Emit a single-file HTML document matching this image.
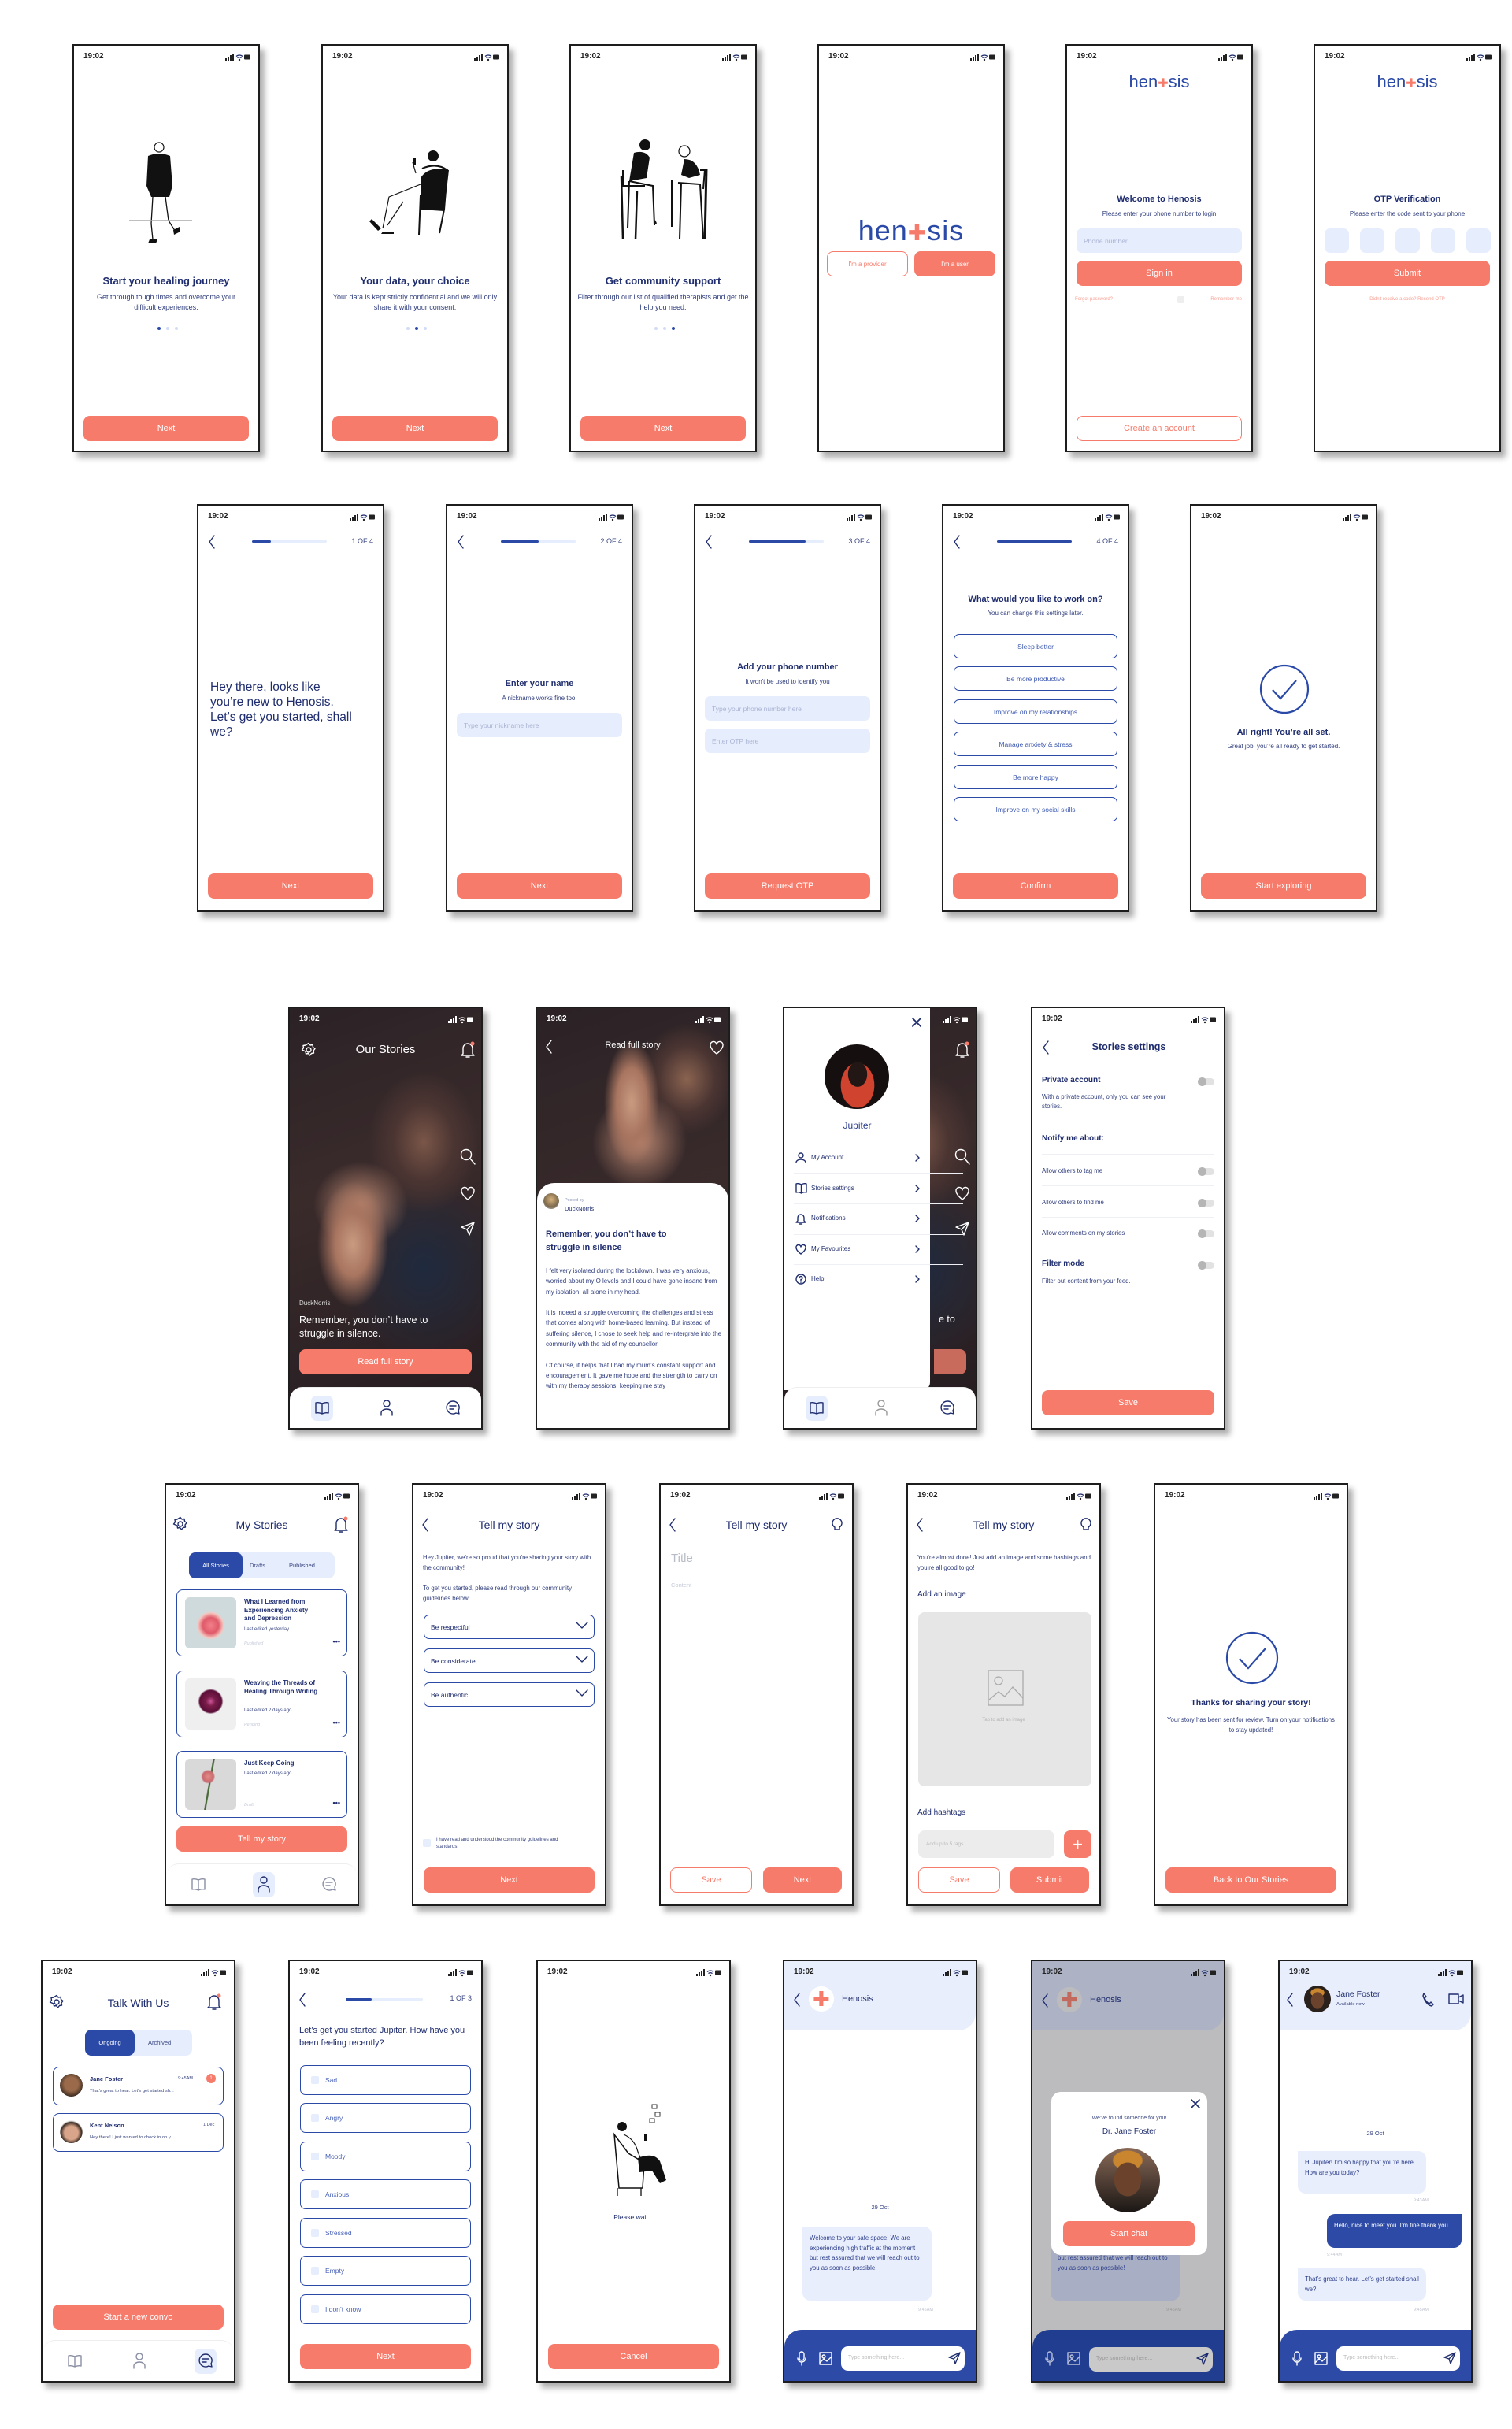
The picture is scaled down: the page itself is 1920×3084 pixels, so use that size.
<!DOCTYPE html>
<html><head><meta charset="utf-8">
<style>
*{box-sizing:border-box;margin:0;padding:0}
body{width:1920px;height:3084px;background:#fff;position:relative;overflow:hidden;font-family:"Liberation Sans",sans-serif;color:#1f2d6e}
.ph{position:absolute;background:#fff;border:2px solid #1d1d1d;box-shadow:6px 7px 7px rgba(0,0,0,.32);overflow:hidden}
.A{width:238px;height:518px}.B{width:247px;height:537px}
.a{position:absolute}
.st{position:absolute;left:12px;top:8px;font-weight:bold;font-size:10px;color:#222}
.sb{position:absolute;right:8px;top:10px;fill:#222}
.w .st{color:#fff}.w .sb{fill:#fff}
.btn{position:absolute;left:12px;right:12px;height:32px;border-radius:8px;background:#f77b6b;color:#fff;font-size:11px;display:flex;align-items:center;justify-content:center}
.obtn{position:absolute;height:32px;border-radius:8px;border:1.5px solid #f77b6b;color:#f77b6b;font-size:11px;display:flex;align-items:center;justify-content:center;background:#fff}
.c{text-align:center;left:0;right:0}
.t13{font-size:13px;font-weight:bold;color:#1f2d6e}
.s9{font-size:9px;color:#2f3d7c;line-height:13px}
.inp{position:absolute;left:12px;right:12px;height:31px;border-radius:7px;background:#e6edfc;color:#aab4d4;font-size:8.5px;padding-left:9px;display:flex;align-items:center}
.opt{position:absolute;left:13px;right:13px;height:31px;border:1.5px solid #2b4aa8;border-radius:7px;font-size:8.5px;color:#3b57b0;display:flex;align-items:center;justify-content:center}
.ic{position:absolute;fill:none;stroke:#1f2d6e;stroke-width:1.4;stroke-linecap:round;stroke-linejoin:round}
.wi{stroke:#fff}
.nav{position:absolute;left:0;right:0;bottom:0;height:52px;background:#fff;border-radius:16px 16px 0 0;border-top:1px solid #eee}
.hl{position:absolute;width:28px;height:32px;border-radius:7px;background:#e6edfc}
.card{position:absolute;left:13px;right:13px;border:1.5px solid #2b4aa8;border-radius:8px;background:#fff}
.tg{position:absolute;right:12px;width:20px;height:9px;border-radius:5px;background:#e2e2e2}
.tg:before{content:"";position:absolute;left:-1px;top:-1px;width:11px;height:11px;border-radius:50%;background:#b5b5b5}
.hr{position:absolute;left:12px;right:12px;height:1px;background:#eef0f6}
.photo{position:absolute;left:0;top:0;right:0;bottom:0;background:
radial-gradient(ellipse 45px 80px at 80px 300px,#c99a80 0%,#a87560 50%,transparent 100%),
radial-gradient(ellipse 60px 55px at 90px 250px,#b98670 0%,transparent 100%),
radial-gradient(ellipse 70px 90px at 170px 170px,#7a5648 0%,#4b3532 55%,transparent 100%),
radial-gradient(ellipse 110px 120px at 170px 330px,#1f2a3e 0%,transparent 100%),
linear-gradient(160deg,#2b2226 0%,#3a2b2b 40%,#241c21 100%)}
</style></head><body>

<!-- ===== ROW 1 ===== -->
<div class="ph A" style="left:92px;top:56px">
<div class="st">19:02</div><svg class="sb" width="34" height="10" viewBox="0 0 34 10"><rect x="0" y="6" width="2" height="3"/><rect x="3" y="4" width="2" height="5"/><rect x="6" y="2" width="2" height="7"/><rect x="9" y="0" width="2" height="9"/><path d="M14 3.5a6 6 0 0 1 8 0M15.5 5.6a3.6 3.6 0 0 1 5 0" stroke="currentColor" fill="none" stroke-width="1.3"/><circle cx="18" cy="8" r="1.2"/><rect x="24" y="1.5" width="8" height="6" rx="1"/></svg>
<svg class="a" style="left:70px;top:118px" width="100" height="140" viewBox="0 0 100 140"><circle cx="38" cy="11" r="6" fill="none" stroke="#111" stroke-width="1.2"/><path d="M24 22q14-6 28 0l3 38-4 14H28l-6-14z" fill="#111"/><path d="M30 74l-2 34 2 20M46 74l4 30 10 16" stroke="#111" stroke-width="1.3" fill="none"/><path d="M26 128h10l-2 5h-10zM56 116l8-4 1 6-8 4z" fill="#111"/><path d="M0 104h80" stroke="#aaa" stroke-width="1.5"/></svg>
<div class="a c t13" style="top:291px">Start your healing journey</div>
<div class="a c s9" style="top:313px;left:14px;right:14px">Get through tough times and overcome your difficult experiences.</div>
<div class="a" style="top:357px;left:106px;width:26px;height:4px"><i class="a" style="left:0;width:4px;height:4px;border-radius:2px;background:#2b4aa8"></i><i class="a" style="left:11px;width:4px;height:4px;border-radius:2px;background:#d3dcf6"></i><i class="a" style="left:22px;width:4px;height:4px;border-radius:2px;background:#d3dcf6"></i></div>
<div class="btn" style="top:470px">Next</div></div>

<div class="ph A" style="left:408px;top:56px">
<div class="st">19:02</div><svg class="sb" width="34" height="10" viewBox="0 0 34 10"><rect x="0" y="6" width="2" height="3"/><rect x="3" y="4" width="2" height="5"/><rect x="6" y="2" width="2" height="7"/><rect x="9" y="0" width="2" height="9"/><path d="M14 3.5a6 6 0 0 1 8 0M15.5 5.6a3.6 3.6 0 0 1 5 0" stroke="currentColor" fill="none" stroke-width="1.3"/><circle cx="18" cy="8" r="1.2"/><rect x="24" y="1.5" width="8" height="6" rx="1"/></svg>
<svg class="a" style="left:52px;top:128px" width="130" height="120" viewBox="0 0 130 120"><path d="M74 28q18-8 32 2l-4 50-6 30M72 62l-2 50" stroke="#111" stroke-width="2" fill="none"/><path d="M72 40q10-16 36-10l-6 52-30-2z" fill="#111"/><circle cx="88" cy="12" r="7" fill="#111"/><path d="M72 48l-40 16-8 40M50 70l-20 30M62 20l4 14" stroke="#111" stroke-width="1.2" fill="none"/><path d="M10 92l12 12-4 3-11-12zM24 108h14v3H22z" fill="#111"/><rect x="62" y="14" width="4" height="9" fill="#111"/></svg>
<div class="a c t13" style="top:291px">Your data, your choice</div>
<div class="a c s9" style="top:313px;left:8px;right:8px">Your data is kept strictly confidential and we will only share it with your consent.</div>
<div class="a" style="top:357px;left:106px;width:26px;height:4px"><i class="a" style="left:0;width:4px;height:4px;border-radius:2px;background:#d3dcf6"></i><i class="a" style="left:11px;width:4px;height:4px;border-radius:2px;background:#2b4aa8"></i><i class="a" style="left:22px;width:4px;height:4px;border-radius:2px;background:#d3dcf6"></i></div>
<div class="btn" style="top:470px">Next</div></div>

<div class="ph A" style="left:723px;top:56px">
<div class="st">19:02</div><svg class="sb" width="34" height="10" viewBox="0 0 34 10"><rect x="0" y="6" width="2" height="3"/><rect x="3" y="4" width="2" height="5"/><rect x="6" y="2" width="2" height="7"/><rect x="9" y="0" width="2" height="9"/><path d="M14 3.5a6 6 0 0 1 8 0M15.5 5.6a3.6 3.6 0 0 1 5 0" stroke="currentColor" fill="none" stroke-width="1.3"/><circle cx="18" cy="8" r="1.2"/><rect x="24" y="1.5" width="8" height="6" rx="1"/></svg>
<svg class="a" style="left:44px;top:118px" width="150" height="135" viewBox="0 0 150 135"><circle cx="50" cy="8" r="7" fill="#111"/><path d="M36 18q14-4 20 6l-4 26-22 4z" fill="#111"/><path d="M30 54l30 6 2 50M30 54l-2 60M22 40l0 20 8 0M20 60h30" stroke="#111" stroke-width="2" fill="none"/><path d="M20 48l2 80M40 66l-2 62M62 104l2 4" stroke="#111" stroke-width="2.5"/><circle cx="100" cy="16" r="7" fill="none" stroke="#111" stroke-width="1.2"/><path d="M100 26q16 0 20 20l-14 4-10-4z" fill="#111"/><path d="M92 56l28 2 4 70M96 56l-2 72M120 40l6 0-2 24M84 52l0 60" stroke="#111" stroke-width="2" fill="none"/><path d="M128 38l-2 90" stroke="#111" stroke-width="3"/></svg>
<div class="a c t13" style="top:291px">Get community support</div>
<div class="a c s9" style="top:313px;left:8px;right:8px">Filter through our list of qualified therapists and get the help you need.</div>
<div class="a" style="top:357px;left:106px;width:26px;height:4px"><i class="a" style="left:0;width:4px;height:4px;border-radius:2px;background:#d3dcf6"></i><i class="a" style="left:11px;width:4px;height:4px;border-radius:2px;background:#d3dcf6"></i><i class="a" style="left:22px;width:4px;height:4px;border-radius:2px;background:#2b4aa8"></i></div>
<div class="btn" style="top:470px">Next</div></div>

<div class="ph A" style="left:1038px;top:56px">
<div class="st">19:02</div><svg class="sb" width="34" height="10" viewBox="0 0 34 10"><rect x="0" y="6" width="2" height="3"/><rect x="3" y="4" width="2" height="5"/><rect x="6" y="2" width="2" height="7"/><rect x="9" y="0" width="2" height="9"/><path d="M14 3.5a6 6 0 0 1 8 0M15.5 5.6a3.6 3.6 0 0 1 5 0" stroke="currentColor" fill="none" stroke-width="1.3"/><circle cx="18" cy="8" r="1.2"/><rect x="24" y="1.5" width="8" height="6" rx="1"/></svg>
<div class="a c" style="top:214px;font-size:36px;color:#2b4aa8;letter-spacing:1px">hen<span style="color:#f77b6b;font-size:28px">✚</span>sis</div>
<div class="obtn" style="left:10px;width:103px;top:261px;font-size:8px">I'm a provider</div>
<div class="btn" style="left:121px;right:10px;top:261px;font-size:8px">I'm a user</div></div>

<div class="ph A" style="left:1353px;top:56px">
<div class="st">19:02</div><svg class="sb" width="34" height="10" viewBox="0 0 34 10"><rect x="0" y="6" width="2" height="3"/><rect x="3" y="4" width="2" height="5"/><rect x="6" y="2" width="2" height="7"/><rect x="9" y="0" width="2" height="9"/><path d="M14 3.5a6 6 0 0 1 8 0M15.5 5.6a3.6 3.6 0 0 1 5 0" stroke="currentColor" fill="none" stroke-width="1.3"/><circle cx="18" cy="8" r="1.2"/><rect x="24" y="1.5" width="8" height="6" rx="1"/></svg>
<div class="a c" style="top:33px;font-size:22px;color:#2b4aa8">hen<span style="color:#f77b6b;font-size:16px">✚</span>sis</div>
<div class="a c" style="top:189px;font-size:11px;font-weight:bold">Welcome to Henosis</div>
<div class="a c" style="top:209px;font-size:8px;color:#2f3d7c">Please enter your phone number to login</div>
<div class="inp" style="top:232px">Phone number</div>
<div class="btn" style="top:273px">Sign in</div>
<div class="a" style="top:319px;left:10px;font-size:6px;color:#f9a094">Forgot password?</div>
<div class="a" style="top:318px;left:140px;width:9px;height:9px;background:#eee;border-radius:2px"></div>
<div class="a" style="top:319px;right:12px;font-size:6px;color:#f9a094">Remember me</div>
<div class="obtn" style="left:12px;right:12px;top:470px">Create an account</div></div>

<div class="ph A" style="left:1668px;top:56px">
<div class="st">19:02</div><svg class="sb" width="34" height="10" viewBox="0 0 34 10"><rect x="0" y="6" width="2" height="3"/><rect x="3" y="4" width="2" height="5"/><rect x="6" y="2" width="2" height="7"/><rect x="9" y="0" width="2" height="9"/><path d="M14 3.5a6 6 0 0 1 8 0M15.5 5.6a3.6 3.6 0 0 1 5 0" stroke="currentColor" fill="none" stroke-width="1.3"/><circle cx="18" cy="8" r="1.2"/><rect x="24" y="1.5" width="8" height="6" rx="1"/></svg>
<div class="a c" style="top:33px;font-size:22px;color:#2b4aa8">hen<span style="color:#f77b6b;font-size:16px">✚</span>sis</div>
<div class="a c" style="top:189px;font-size:11px;font-weight:bold">OTP Verification</div>
<div class="a c" style="top:209px;font-size:8px;color:#2f3d7c">Please enter the code sent to your phone</div>
<div class="a" style="top:232px;left:12px;width:31px;height:31px;border-radius:7px;background:#e6edfc"></div>
<div class="a" style="top:232px;left:57px;width:31px;height:31px;border-radius:7px;background:#e6edfc"></div>
<div class="a" style="top:232px;left:102px;width:31px;height:31px;border-radius:7px;background:#e6edfc"></div>
<div class="a" style="top:232px;left:147px;width:31px;height:31px;border-radius:7px;background:#e6edfc"></div>
<div class="a" style="top:232px;left:192px;width:31px;height:31px;border-radius:7px;background:#e6edfc"></div>
<div class="btn" style="top:273px">Submit</div>
<div class="a c" style="top:319px;font-size:6px;color:#f9a094">Didn't receive a code? Resend OTP</div></div>

<!-- ===== ROW 2 ===== -->
<div class="ph A" style="left:250px;top:640px">
<div class="st">19:02</div><svg class="sb" width="34" height="10" viewBox="0 0 34 10"><rect x="0" y="6" width="2" height="3"/><rect x="3" y="4" width="2" height="5"/><rect x="6" y="2" width="2" height="7"/><rect x="9" y="0" width="2" height="9"/><path d="M14 3.5a6 6 0 0 1 8 0M15.5 5.6a3.6 3.6 0 0 1 5 0" stroke="currentColor" fill="none" stroke-width="1.3"/><circle cx="18" cy="8" r="1.2"/><rect x="24" y="1.5" width="8" height="6" rx="1"/></svg>
<svg class="ic" style="left:12px;top:37px" width="10" height="18"><path d="M8 1L2 9l6 8"/></svg>
<div class="a" style="left:68px;top:44px;width:95px;height:3px;background:#e6edfc;border-radius:2px"><i class="a" style="left:0;top:0;width:24px;height:3px;background:#2b4aa8;border-radius:2px"></i></div>
<div class="a" style="right:12px;top:40px;font-size:9px;color:#3b4883">1 OF 4</div>
<div class="a" style="left:15px;top:221px;font-size:15.5px;line-height:19px;color:#1f2d6e;width:185px">Hey there, looks like you’re new to Henosis. Let’s get you started, shall we?</div>
<div class="btn" style="top:467px">Next</div></div>

<div class="ph A" style="left:566px;top:640px">
<div class="st">19:02</div><svg class="sb" width="34" height="10" viewBox="0 0 34 10"><rect x="0" y="6" width="2" height="3"/><rect x="3" y="4" width="2" height="5"/><rect x="6" y="2" width="2" height="7"/><rect x="9" y="0" width="2" height="9"/><path d="M14 3.5a6 6 0 0 1 8 0M15.5 5.6a3.6 3.6 0 0 1 5 0" stroke="currentColor" fill="none" stroke-width="1.3"/><circle cx="18" cy="8" r="1.2"/><rect x="24" y="1.5" width="8" height="6" rx="1"/></svg>
<svg class="ic" style="left:12px;top:37px" width="10" height="18"><path d="M8 1L2 9l6 8"/></svg>
<div class="a" style="left:68px;top:44px;width:95px;height:3px;background:#e6edfc;border-radius:2px"><i class="a" style="left:0;top:0;width:48px;height:3px;background:#2b4aa8;border-radius:2px"></i></div>
<div class="a" style="right:12px;top:40px;font-size:9px;color:#3b4883">2 OF 4</div>
<div class="a c" style="top:220px;font-size:11px;font-weight:bold">Enter your name</div>
<div class="a c" style="top:240px;font-size:8px;color:#2f3d7c">A nickname works fine too!</div>
<div class="inp" style="top:263px">Type your nickname here</div>
<div class="btn" style="top:467px">Next</div></div>

<div class="ph A" style="left:881px;top:640px">
<div class="st">19:02</div><svg class="sb" width="34" height="10" viewBox="0 0 34 10"><rect x="0" y="6" width="2" height="3"/><rect x="3" y="4" width="2" height="5"/><rect x="6" y="2" width="2" height="7"/><rect x="9" y="0" width="2" height="9"/><path d="M14 3.5a6 6 0 0 1 8 0M15.5 5.6a3.6 3.6 0 0 1 5 0" stroke="currentColor" fill="none" stroke-width="1.3"/><circle cx="18" cy="8" r="1.2"/><rect x="24" y="1.5" width="8" height="6" rx="1"/></svg>
<svg class="ic" style="left:12px;top:37px" width="10" height="18"><path d="M8 1L2 9l6 8"/></svg>
<div class="a" style="left:68px;top:44px;width:95px;height:3px;background:#e6edfc;border-radius:2px"><i class="a" style="left:0;top:0;width:72px;height:3px;background:#2b4aa8;border-radius:2px"></i></div>
<div class="a" style="right:12px;top:40px;font-size:9px;color:#3b4883">3 OF 4</div>
<div class="a c" style="top:199px;font-size:11px;font-weight:bold">Add your phone number</div>
<div class="a c" style="top:219px;font-size:8px;color:#2f3d7c">It won't be used to identify you</div>
<div class="inp" style="top:242px">Type your phone number here</div>
<div class="inp" style="top:283px">Enter OTP here</div>
<div class="btn" style="top:467px">Request OTP</div></div>

<div class="ph A" style="left:1196px;top:640px">
<div class="st">19:02</div><svg class="sb" width="34" height="10" viewBox="0 0 34 10"><rect x="0" y="6" width="2" height="3"/><rect x="3" y="4" width="2" height="5"/><rect x="6" y="2" width="2" height="7"/><rect x="9" y="0" width="2" height="9"/><path d="M14 3.5a6 6 0 0 1 8 0M15.5 5.6a3.6 3.6 0 0 1 5 0" stroke="currentColor" fill="none" stroke-width="1.3"/><circle cx="18" cy="8" r="1.2"/><rect x="24" y="1.5" width="8" height="6" rx="1"/></svg>
<svg class="ic" style="left:12px;top:37px" width="10" height="18"><path d="M8 1L2 9l6 8"/></svg>
<div class="a" style="left:68px;top:44px;width:95px;height:3px;background:#2b4aa8;border-radius:2px"></div>
<div class="a" style="right:12px;top:40px;font-size:9px;color:#3b4883">4 OF 4</div>
<div class="a c" style="top:113px;font-size:11px;font-weight:bold">What would you like to work on?</div>
<div class="a c" style="top:132px;font-size:8px;color:#2f3d7c">You can change this settings later.</div>
<div class="opt" style="top:163px">Sleep better</div>
<div class="opt" style="top:204px">Be more productive</div>
<div class="opt" style="top:246px">Improve on my relationships</div>
<div class="opt" style="top:287px">Manage anxiety &amp; stress</div>
<div class="opt" style="top:329px">Be more happy</div>
<div class="opt" style="top:370px">Improve on my social skills</div>
<div class="btn" style="top:467px">Confirm</div></div>

<div class="ph A" style="left:1511px;top:640px">
<div class="st">19:02</div><svg class="sb" width="34" height="10" viewBox="0 0 34 10"><rect x="0" y="6" width="2" height="3"/><rect x="3" y="4" width="2" height="5"/><rect x="6" y="2" width="2" height="7"/><rect x="9" y="0" width="2" height="9"/><path d="M14 3.5a6 6 0 0 1 8 0M15.5 5.6a3.6 3.6 0 0 1 5 0" stroke="currentColor" fill="none" stroke-width="1.3"/><circle cx="18" cy="8" r="1.2"/><rect x="24" y="1.5" width="8" height="6" rx="1"/></svg>
<svg class="a" style="left:85px;top:200px" width="66" height="66" viewBox="0 0 66 66"><circle cx="33" cy="33" r="30" fill="none" stroke="#2b4aa8" stroke-width="2.2"/><path d="M18 34l10 11 20-23" fill="none" stroke="#2b4aa8" stroke-width="2.2"/></svg>
<div class="a c" style="top:282px;font-size:11px;font-weight:bold">All right! You’re all set.</div>
<div class="a c" style="top:301px;font-size:8px;color:#2f3d7c">Great job, you’re all ready to get started.</div>
<div class="btn" style="top:467px">Start exploring</div></div>

<!-- ===== ROW 3 ===== -->
<div class="ph B w" style="left:366px;top:1278px">
<div class="photo"></div>
<div class="st">19:02</div><svg class="sb" width="34" height="10" viewBox="0 0 34 10"><rect x="0" y="6" width="2" height="3"/><rect x="3" y="4" width="2" height="5"/><rect x="6" y="2" width="2" height="7"/><rect x="9" y="0" width="2" height="9"/><path d="M14 3.5a6 6 0 0 1 8 0M15.5 5.6a3.6 3.6 0 0 1 5 0" stroke="#fff" fill="none" stroke-width="1.3"/><circle cx="18" cy="8" r="1.2"/><rect x="24" y="1.5" width="8" height="6" rx="1"/></svg>
<svg class="ic wi" style="left:14px;top:43px" width="20" height="20" viewBox="0 0 20 20"><circle cx="10" cy="10" r="3"/><path d="M10 1.5l2 2.5 3-.5.5 3 2.5 2-2 2.5.5 3-3 .5-2 2.5-2-2.5-3 .5-.5-3L1.5 10l2-2.5-.5-3 3-.5z"/></svg>
<div class="a c" style="top:44px;font-size:15px;color:#fff">Our Stories</div>
<svg class="ic wi" style="left:216px;top:42px" width="20" height="22" viewBox="0 0 20 22"><path d="M4 16V9a6 6 0 0 1 12 0v7l2 2H2zM8 20h4"/><circle cx="16" cy="3" r="2.5" fill="#f77b6b" stroke="none"/></svg>
<svg class="ic wi" style="left:216px;top:178px" width="20" height="22" viewBox="0 0 20 22"><circle cx="8" cy="8" r="6.5"/><path d="M13 13l6 7"/></svg>
<svg class="ic wi" style="left:216px;top:225px" width="20" height="20" viewBox="0 0 20 20"><path d="M10 18S2 12 2 7a4 4 0 0 1 8-1 4 4 0 0 1 8 1c0 5-8 11-8 11z"/></svg>
<svg class="ic wi" style="left:216px;top:270px" width="20" height="20" viewBox="0 0 20 20"><path d="M18 2L2 8l7 3 3 7zM9 11l9-9"/></svg>
<div class="a" style="left:12px;top:370px;font-size:8px;color:#ddd">DuckNorris</div>
<div class="a" style="left:12px;top:388px;font-size:12.5px;line-height:17px;color:#fff;width:210px">Remember, you don’t have to struggle in silence.</div>
<div class="btn" style="top:433px">Read full story</div>
<div class="nav"><div class="hl" style="left:27px;top:10px"></div>
<svg class="ic" style="left:31px;top:17px" width="20" height="18" viewBox="0 0 20 18"><path d="M10 3v13M10 3Q6 1 2 2v13q4-1 8 1 4-2 8-1V2q-4-1-8 1"/></svg>
<svg class="ic" style="left:114px;top:14px" width="18" height="22" viewBox="0 0 18 22"><circle cx="9" cy="6" r="4"/><path d="M2 21v-3a7 5 0 0 1 14 0v3"/></svg>
<svg class="ic" style="left:197px;top:15px" width="20" height="20" viewBox="0 0 20 20"><path d="M10 2a8 8 0 1 0 4 15l4 1-1-4a8 8 0 0 0-7-12zM6 8h8M6 12h5"/></svg></div></div>

<div class="ph B w" style="left:680px;top:1278px">
<div class="photo" style="background:radial-gradient(ellipse 35px 80px at 120px 120px,#c99a80 0%,#a87560 55%,transparent 100%),radial-gradient(ellipse 60px 60px at 130px 170px,#b98670,transparent),radial-gradient(ellipse 60px 70px at 190px 90px,#8a6350,#4b3532 60%,transparent),linear-gradient(160deg,#2b2226,#3a2b2b 50%,#1f2a3e)"></div>
<div class="st">19:02</div><svg class="sb" width="34" height="10" viewBox="0 0 34 10"><rect x="0" y="6" width="2" height="3"/><rect x="3" y="4" width="2" height="5"/><rect x="6" y="2" width="2" height="7"/><rect x="9" y="0" width="2" height="9"/><path d="M14 3.5a6 6 0 0 1 8 0M15.5 5.6a3.6 3.6 0 0 1 5 0" stroke="#fff" fill="none" stroke-width="1.3"/><circle cx="18" cy="8" r="1.2"/><rect x="24" y="1.5" width="8" height="6" rx="1"/></svg>
<svg class="ic wi" style="left:10px;top:40px" width="10" height="18"><path d="M8 1L2 9l6 8"/></svg>
<div class="a c" style="top:41px;font-size:11px;color:#fff">Read full story</div>
<svg class="ic wi" style="left:218px;top:40px" width="20" height="20" viewBox="0 0 20 20"><path d="M10 18S2 12 2 7a4 4 0 0 1 8-1 4 4 0 0 1 8 1c0 5-8 11-8 11z"/></svg>
<div class="a" style="left:0;right:0;top:222px;bottom:0;background:#fff;border-radius:22px 22px 0 0"></div>
<div class="a" style="left:8px;top:235px;width:20px;height:20px;border-radius:50%;background:radial-gradient(circle at 50% 40%,#d9b27a,#7c6a4e 60%,#ccc)"></div>
<div class="a" style="left:35px;top:241px;font-size:5.5px;color:#8a93b8">Posted by</div>
<div class="a" style="left:35px;top:250px;font-size:7.5px;color:#1f2d6e">DuckNorris</div>
<div class="a" style="left:11px;top:279px;font-size:11px;line-height:17px;font-weight:bold;width:195px">Remember, you don’t have to struggle in silence</div>
<div class="a" style="left:11px;top:327px;font-size:8px;line-height:13.3px;color:#2f3d7c;width:225px">I felt very isolated during the lockdown. I was very anxious, worried about my O levels and I could have gone insane from my isolation, all alone in my head.<br><br>It is indeed a struggle overcoming the challenges and stress that comes along with home-based learning. But instead of suffering silence, I chose to seek help and re-intergrate into the community with the aid of my counsellor.<br><br>Of course, it helps that I had my mum’s constant support and encouragement. It gave me hope and the strength to carry on with my therapy sessions, keeping me stay</div></div>

<div class="ph B w" style="left:994px;top:1278px">
<div class="photo"></div>
<svg class="sb" width="34" height="10" viewBox="0 0 34 10"><rect x="0" y="6" width="2" height="3"/><rect x="3" y="4" width="2" height="5"/><rect x="6" y="2" width="2" height="7"/><rect x="9" y="0" width="2" height="9"/><path d="M14 3.5a6 6 0 0 1 8 0M15.5 5.6a3.6 3.6 0 0 1 5 0" stroke="#fff" fill="none" stroke-width="1.3"/><circle cx="18" cy="8" r="1.2"/><rect x="24" y="1.5" width="8" height="6" rx="1"/></svg>
<svg class="ic wi" style="left:216px;top:42px" width="20" height="22" viewBox="0 0 20 22"><path d="M4 16V9a6 6 0 0 1 12 0v7l2 2H2zM8 20h4"/><circle cx="16" cy="3" r="2.5" fill="#f77b6b" stroke="none"/></svg>
<svg class="ic wi" style="left:216px;top:178px" width="20" height="22" viewBox="0 0 20 22"><circle cx="8" cy="8" r="6.5"/><path d="M13 13l6 7"/></svg>
<svg class="ic wi" style="left:216px;top:225px" width="20" height="20" viewBox="0 0 20 20"><path d="M10 18S2 12 2 7a4 4 0 0 1 8-1 4 4 0 0 1 8 1c0 5-8 11-8 11z"/></svg>
<svg class="ic wi" style="left:216px;top:270px" width="20" height="20" viewBox="0 0 20 20"><path d="M18 2L2 8l7 3 3 7zM9 11l9-9"/></svg>
<div class="a" style="left:196px;top:388px;font-size:12.5px;color:#fff">e to</div>
<div class="a" style="left:190px;right:12px;top:433px;height:32px;background:#c86a5c;border-radius:0 8px 8px 0"></div>
<div class="a" style="left:0;top:0;width:185px;height:485px;background:#fff;border-radius:0 0 10px 0"></div>
<svg class="ic" style="left:161px;top:11px" width="14" height="14" viewBox="0 0 14 14"><path d="M2 2l10 10M12 2L2 12" stroke-width="1.8"/></svg>
<div class="a" style="left:51px;top:46px;width:82px;height:82px;border-radius:50%;background:radial-gradient(ellipse 20px 26px at 42px 38px,#231716 60%,transparent 62%),radial-gradient(ellipse 30px 40px at 42px 52px,#d0432f 70%,transparent 72%),#160f0f"></div>
<div class="a" style="left:0;width:185px;top:142px;text-align:center;font-size:12px;color:#2b3d8a">Jupiter</div>
<svg class="ic" style="left:14px;top:183px" width="14" height="14" viewBox="0 0 14 14"><circle cx="7" cy="4" r="3"/><path d="M1 13a6 4 0 0 1 12 0"/></svg><div class="a" style="left:34px;top:185px;font-size:8px">My Account</div><svg class="ic" style="left:166px;top:185px" width="6" height="10"><path d="M1 1l4 4-4 4"/></svg><div class="hr" style="top:209px;right:16px"></div>
<svg class="ic" style="left:14px;top:222px" width="15" height="14" viewBox="0 0 15 14"><path d="M7.5 2v11M7.5 2Q4 0 1 1v11q3-1 6.5 1 3.5-2 6.5-1V1q-3-1-6.5 1"/></svg><div class="a" style="left:34px;top:224px;font-size:8px">Stories settings</div><svg class="ic" style="left:166px;top:224px" width="6" height="10"><path d="M1 1l4 4-4 4"/></svg><div class="hr" style="top:248px;right:16px"></div>
<svg class="ic" style="left:14px;top:260px" width="14" height="15" viewBox="0 0 14 15"><path d="M3 10V6a4 4 0 0 1 8 0v4l2 2H1zM5.5 14h3"/></svg><div class="a" style="left:34px;top:262px;font-size:8px">Notifications</div><svg class="ic" style="left:166px;top:262px" width="6" height="10"><path d="M1 1l4 4-4 4"/></svg><div class="hr" style="top:287px;right:16px"></div>
<svg class="ic" style="left:14px;top:299px" width="14" height="14" viewBox="0 0 14 14"><path d="M7 13S1 9 1 5a3 3 0 0 1 6-1 3 3 0 0 1 6 1c0 4-6 8-6 8z"/></svg><div class="a" style="left:34px;top:301px;font-size:8px">My Favourites</div><svg class="ic" style="left:166px;top:301px" width="6" height="10"><path d="M1 1l4 4-4 4"/></svg><div class="hr" style="top:325px;right:16px"></div>
<svg class="ic" style="left:14px;top:337px" width="14" height="14" viewBox="0 0 14 14"><circle cx="7" cy="7" r="6"/><path d="M5 5.5a2 2 0 1 1 2 2v1.5M7 11v.3"/></svg><div class="a" style="left:34px;top:339px;font-size:8px">Help</div><svg class="ic" style="left:166px;top:339px" width="6" height="10"><path d="M1 1l4 4-4 4"/></svg>
<div class="nav"><div class="hl" style="left:27px;top:10px"></div>
<svg class="ic" style="left:31px;top:17px" width="20" height="18" viewBox="0 0 20 18"><path d="M10 3v13M10 3Q6 1 2 2v13q4-1 8 1 4-2 8-1V2q-4-1-8 1"/></svg>
<svg class="ic" style="left:114px;top:14px;stroke:#999" width="18" height="22" viewBox="0 0 18 22"><circle cx="9" cy="6" r="4"/><path d="M2 21v-3a7 5 0 0 1 14 0v3"/></svg>
<svg class="ic" style="left:197px;top:15px" width="20" height="20" viewBox="0 0 20 20"><path d="M10 2a8 8 0 1 0 4 15l4 1-1-4a8 8 0 0 0-7-12zM6 8h8M6 12h5"/></svg></div></div>

<div class="ph B" style="left:1309px;top:1278px">
<div class="st">19:02</div><svg class="sb" width="34" height="10" viewBox="0 0 34 10"><rect x="0" y="6" width="2" height="3"/><rect x="3" y="4" width="2" height="5"/><rect x="6" y="2" width="2" height="7"/><rect x="9" y="0" width="2" height="9"/><path d="M14 3.5a6 6 0 0 1 8 0M15.5 5.6a3.6 3.6 0 0 1 5 0" stroke="currentColor" fill="none" stroke-width="1.3"/><circle cx="18" cy="8" r="1.2"/><rect x="24" y="1.5" width="8" height="6" rx="1"/></svg>
<svg class="ic" style="left:12px;top:41px" width="10" height="18"><path d="M8 1L2 9l6 8"/></svg>
<div class="a" style="left:0;right:0;text-align:center;top:42px;font-size:12.5px;font-weight:bold;padding-left:2px">Stories settings</div>
<div class="a" style="left:12px;top:86px;font-size:10px;font-weight:bold">Private account</div><div class="tg" style="top:89px"></div>
<div class="a" style="left:12px;top:107px;font-size:7.8px;line-height:12px;color:#2f3d7c;width:170px">With a private account, only you can see your stories.</div>
<div class="a" style="left:12px;top:160px;font-size:10px;font-weight:bold">Notify me about:</div>
<div class="hr" style="top:185px"></div>
<div class="a" style="left:12px;top:202px;font-size:7.8px;color:#2f3d7c">Allow others to tag me</div><div class="tg" style="top:203px"></div>
<div class="hr" style="top:225px"></div>
<div class="a" style="left:12px;top:242px;font-size:7.8px;color:#2f3d7c">Allow others to find me</div><div class="tg" style="top:243px"></div>
<div class="hr" style="top:265px"></div>
<div class="a" style="left:12px;top:281px;font-size:7.8px;color:#2f3d7c">Allow comments on my stories</div><div class="tg" style="top:282px"></div>
<div class="a" style="left:12px;top:319px;font-size:10px;font-weight:bold">Filter mode</div><div class="tg" style="top:322px"></div>
<div class="a" style="left:12px;top:342px;font-size:7.8px;color:#2f3d7c">Filter out content from your feed.</div>
<div class="btn" style="top:485px">Save</div></div>

<!-- ===== ROW 4 ===== -->
<div class="ph B" style="left:209px;top:1883px">
<div class="st">19:02</div><svg class="sb" width="34" height="10" viewBox="0 0 34 10"><rect x="0" y="6" width="2" height="3"/><rect x="3" y="4" width="2" height="5"/><rect x="6" y="2" width="2" height="7"/><rect x="9" y="0" width="2" height="9"/><path d="M14 3.5a6 6 0 0 1 8 0M15.5 5.6a3.6 3.6 0 0 1 5 0" stroke="currentColor" fill="none" stroke-width="1.3"/><circle cx="18" cy="8" r="1.2"/><rect x="24" y="1.5" width="8" height="6" rx="1"/></svg>
<svg class="ic" style="left:8px;top:40px" width="20" height="20" viewBox="0 0 20 20"><circle cx="10" cy="10" r="3"/><path d="M10 1.5l2 2.5 3-.5.5 3 2.5 2-2 2.5.5 3-3 .5-2 2.5-2-2.5-3 .5-.5-3L1.5 10l2-2.5-.5-3 3-.5z"/></svg>
<div class="a c" style="top:43px;font-size:14px">My Stories</div>
<svg class="ic" style="left:212px;top:40px" width="20" height="22" viewBox="0 0 20 22"><path d="M4 16V9a6 6 0 0 1 12 0v7l2 2H2zM8 20h4"/><circle cx="16" cy="3" r="2.5" fill="#f77b6b" stroke="none"/></svg>
<div class="a" style="left:29px;top:86px;width:185px;height:33px;border-radius:8px;background:#e6edfc"></div>
<div class="a" style="left:29px;top:86px;width:68px;height:33px;border-radius:8px;background:#2b4aa8;color:#fff;font-size:7.5px;display:flex;align-items:center;justify-content:center">All Stories</div>
<div class="a" style="left:106px;top:98px;font-size:7.5px;color:#3b4883">Drafts</div>
<div class="a" style="left:156px;top:98px;font-size:7.5px;color:#3b4883">Published</div>
<div class="card" style="top:133px;height:85px"><div class="a" style="left:10px;top:9px;width:65px;height:65px;border-radius:6px;background:radial-gradient(circle at 50% 55%,#f2808a 0,#e05a6a 10px,#f4c7c0 16px,transparent 18px),#cfdadd"></div><div class="a" style="left:85px;top:10px;font-size:8px;line-height:10.5px;font-weight:bold;width:95px">What I Learned from Experiencing Anxiety and Depression</div><div class="a" style="left:85px;top:47px;font-size:6px;color:#3b4883">Last edited yesterday</div><div class="a" style="left:85px;top:65px;font-size:5.5px;color:#c5cad8;font-style:italic">Published</div><div class="a" style="right:8px;top:60px;font-size:9px;font-weight:bold">•••</div></div>
<div class="card" style="top:236px;height:85px"><div class="a" style="left:10px;top:9px;width:65px;height:65px;border-radius:6px;background:radial-gradient(circle at 50% 45%,#c59 0,#7a1c4a 6px,#5a0f38 14px,transparent 16px),#efefef"></div><div class="a" style="left:85px;top:10px;font-size:8px;line-height:10.5px;font-weight:bold;width:95px">Weaving the Threads of Healing Through Writing</div><div class="a" style="left:85px;top:47px;font-size:6px;color:#3b4883">Last edited 2 days ago</div><div class="a" style="left:85px;top:65px;font-size:5.5px;color:#c5cad8;font-style:italic">Pending</div><div class="a" style="right:8px;top:60px;font-size:9px;font-weight:bold">•••</div></div>
<div class="card" style="top:338px;height:85px"><div class="a" style="left:10px;top:9px;width:65px;height:65px;border-radius:6px;background:radial-gradient(circle at 45% 35%,#e58a86 0,#c86a70 7px,transparent 9px),linear-gradient(100deg,transparent 46%,#4a6a3a 47%,#4a6a3a 49%,transparent 50%),#d9d9d9"></div><div class="a" style="left:85px;top:10px;font-size:8px;line-height:10.5px;font-weight:bold;width:95px">Just Keep Going</div><div class="a" style="left:85px;top:25px;font-size:6px;color:#3b4883">Last edited 2 days ago</div><div class="a" style="left:85px;top:65px;font-size:5.5px;color:#c5cad8;font-style:italic">Draft</div><div class="a" style="right:8px;top:60px;font-size:9px;font-weight:bold">•••</div></div>
<div class="btn" style="top:434px;left:13px;right:13px">Tell my story</div>
<div class="nav"><div class="hl" style="left:110px;top:10px"></div>
<svg class="ic" style="left:31px;top:17px;stroke:#8a8fa3" width="20" height="18" viewBox="0 0 20 18"><path d="M10 3v13M10 3Q6 1 2 2v13q4-1 8 1 4-2 8-1V2q-4-1-8 1"/></svg>
<svg class="ic" style="left:115px;top:14px" width="18" height="22" viewBox="0 0 18 22"><circle cx="9" cy="6" r="4"/><path d="M2 21v-3a7 5 0 0 1 14 0v3"/></svg>
<svg class="ic" style="left:197px;top:15px;stroke:#8a8fa3" width="20" height="20" viewBox="0 0 20 20"><path d="M10 2a8 8 0 1 0 4 15l4 1-1-4a8 8 0 0 0-7-12zM6 8h8M6 12h5"/></svg></div></div>

<div class="ph B" style="left:523px;top:1883px">
<div class="st">19:02</div><svg class="sb" width="34" height="10" viewBox="0 0 34 10"><rect x="0" y="6" width="2" height="3"/><rect x="3" y="4" width="2" height="5"/><rect x="6" y="2" width="2" height="7"/><rect x="9" y="0" width="2" height="9"/><path d="M14 3.5a6 6 0 0 1 8 0M15.5 5.6a3.6 3.6 0 0 1 5 0" stroke="currentColor" fill="none" stroke-width="1.3"/><circle cx="18" cy="8" r="1.2"/><rect x="24" y="1.5" width="8" height="6" rx="1"/></svg>
<svg class="ic" style="left:10px;top:42px" width="10" height="18"><path d="M8 1L2 9l6 8"/></svg>
<div class="a c" style="top:43px;font-size:14px">Tell my story</div>
<div class="a" style="left:12px;top:86px;font-size:7.8px;line-height:13px;color:#2f3d7c;width:215px">Hey Jupiter, we’re so proud that you’re sharing your story with the community!<br><br>To get you started, please read through our community guidelines below:</div>
<div class="opt" style="top:165px;justify-content:flex-start;padding-left:8px;color:#1f2d6e">Be respectful</div><svg class="ic" style="left:206px;top:174px" width="16" height="10"><path d="M1 1l7 7 7-7"/></svg>
<div class="opt" style="top:208px;justify-content:flex-start;padding-left:8px;color:#1f2d6e">Be considerate</div><svg class="ic" style="left:206px;top:217px" width="16" height="10"><path d="M1 1l7 7 7-7"/></svg>
<div class="opt" style="top:251px;justify-content:flex-start;padding-left:8px;color:#1f2d6e">Be authentic</div><svg class="ic" style="left:206px;top:260px" width="16" height="10"><path d="M1 1l7 7 7-7"/></svg>
<div class="a" style="left:12px;top:450px;width:10px;height:10px;border-radius:2px;background:#e6edfc"></div>
<div class="a" style="left:29px;top:447px;font-size:6px;line-height:9px;color:#2f3d7c;width:180px">I have read and understood the community guidelines and standards.</div>
<div class="btn" style="top:486px;left:13px;right:13px">Next</div></div>

<div class="ph B" style="left:837px;top:1883px">
<div class="st">19:02</div><svg class="sb" width="34" height="10" viewBox="0 0 34 10"><rect x="0" y="6" width="2" height="3"/><rect x="3" y="4" width="2" height="5"/><rect x="6" y="2" width="2" height="7"/><rect x="9" y="0" width="2" height="9"/><path d="M14 3.5a6 6 0 0 1 8 0M15.5 5.6a3.6 3.6 0 0 1 5 0" stroke="currentColor" fill="none" stroke-width="1.3"/><circle cx="18" cy="8" r="1.2"/><rect x="24" y="1.5" width="8" height="6" rx="1"/></svg>
<svg class="ic" style="left:10px;top:42px" width="10" height="18"><path d="M8 1L2 9l6 8"/></svg>
<div class="a c" style="top:43px;font-size:14px">Tell my story</div>
<svg class="ic" style="left:217px;top:40px" width="14" height="20" viewBox="0 0 14 20"><path d="M4 14a6 6 0 1 1 6 0v3H4zM4 17h6"/></svg>
<div class="a" style="left:10px;top:84px;width:1px;height:22px;background:#2b4aa8"></div>
<div class="a" style="left:13px;top:85px;font-size:15px;color:#b8bcc8">Title</div>
<div class="a" style="left:13px;top:123px;font-size:7.5px;color:#c5cad8">Content</div>
<div class="obtn" style="top:486px;left:12px;width:104px">Save</div>
<div class="btn" style="top:486px;left:130px;right:13px">Next</div></div>

<div class="ph B" style="left:1151px;top:1883px">
<div class="st">19:02</div><svg class="sb" width="34" height="10" viewBox="0 0 34 10"><rect x="0" y="6" width="2" height="3"/><rect x="3" y="4" width="2" height="5"/><rect x="6" y="2" width="2" height="7"/><rect x="9" y="0" width="2" height="9"/><path d="M14 3.5a6 6 0 0 1 8 0M15.5 5.6a3.6 3.6 0 0 1 5 0" stroke="currentColor" fill="none" stroke-width="1.3"/><circle cx="18" cy="8" r="1.2"/><rect x="24" y="1.5" width="8" height="6" rx="1"/></svg>
<svg class="ic" style="left:10px;top:42px" width="10" height="18"><path d="M8 1L2 9l6 8"/></svg>
<div class="a c" style="top:43px;font-size:14px">Tell my story</div>
<svg class="ic" style="left:219px;top:40px" width="14" height="20" viewBox="0 0 14 20"><path d="M4 14a6 6 0 1 1 6 0v3H4zM4 17h6"/></svg>
<div class="a" style="left:12px;top:86px;font-size:7.8px;line-height:13px;color:#2f3d7c;width:222px">You’re almost done! Just add an image and some hashtags and you’re all good to go!</div>
<div class="a" style="left:12px;top:134px;font-size:10px">Add an image</div>
<div class="a" style="left:13px;top:162px;width:220px;height:221px;border-radius:8px;background:#e6e6e6"></div>
<svg class="a" style="left:101px;top:235px" width="46" height="46" viewBox="0 0 46 46"><rect x="1" y="1" width="44" height="44" fill="none" stroke="#aaa" stroke-width="1.3"/><circle cx="14" cy="14" r="5" fill="none" stroke="#aaa" stroke-width="1.3"/><path d="M2 38l12-10 8 6 10-12 13 14" fill="none" stroke="#aaa" stroke-width="1.3"/></svg>
<div class="a" style="left:0;right:0;text-align:center;top:296px;font-size:6px;color:#b5b5b5">Tap to add an image</div>
<div class="a" style="left:12px;top:411px;font-size:10px">Add hashtags</div>
<div class="a" style="left:13px;top:439px;width:173px;height:35px;border-radius:8px;background:#ececec;font-size:6.5px;color:#bbb;padding:14px 0 0 10px">Add up to 5 tags</div>
<div class="a" style="left:198px;top:439px;width:35px;height:35px;border-radius:8px;background:#f77b6b;color:#fff;font-size:22px;line-height:35px;text-align:center">+</div>
<div class="obtn" style="top:486px;left:13px;width:104px">Save</div>
<div class="btn" style="top:486px;left:130px;right:13px">Submit</div></div>

<div class="ph B" style="left:1465px;top:1883px">
<div class="st">19:02</div><svg class="sb" width="34" height="10" viewBox="0 0 34 10"><rect x="0" y="6" width="2" height="3"/><rect x="3" y="4" width="2" height="5"/><rect x="6" y="2" width="2" height="7"/><rect x="9" y="0" width="2" height="9"/><path d="M14 3.5a6 6 0 0 1 8 0M15.5 5.6a3.6 3.6 0 0 1 5 0" stroke="currentColor" fill="none" stroke-width="1.3"/><circle cx="18" cy="8" r="1.2"/><rect x="24" y="1.5" width="8" height="6" rx="1"/></svg>
<svg class="a" style="left:88px;top:185px" width="70" height="70" viewBox="0 0 70 70"><circle cx="35" cy="35" r="32" fill="none" stroke="#2b4aa8" stroke-width="2.2"/><path d="M19 36l11 12 22-25" fill="none" stroke="#2b4aa8" stroke-width="2.2"/></svg>
<div class="a c" style="top:271px;font-size:10.5px;font-weight:bold">Thanks for sharing your story!</div>
<div class="a c" style="top:292px;font-size:7.8px;line-height:13px;color:#2f3d7c;left:12px;right:12px">Your story has been sent for review. Turn on your notifications to stay updated!</div>
<div class="btn" style="top:486px;left:13px;right:13px">Back to Our Stories</div></div>

<!-- ===== ROW 5 ===== -->
<div class="ph B" style="left:52px;top:2488px">
<div class="st">19:02</div><svg class="sb" width="34" height="10" viewBox="0 0 34 10"><rect x="0" y="6" width="2" height="3"/><rect x="3" y="4" width="2" height="5"/><rect x="6" y="2" width="2" height="7"/><rect x="9" y="0" width="2" height="9"/><path d="M14 3.5a6 6 0 0 1 8 0M15.5 5.6a3.6 3.6 0 0 1 5 0" stroke="currentColor" fill="none" stroke-width="1.3"/><circle cx="18" cy="8" r="1.2"/><rect x="24" y="1.5" width="8" height="6" rx="1"/></svg>
<svg class="ic" style="left:8px;top:42px" width="20" height="20" viewBox="0 0 20 20"><circle cx="10" cy="10" r="3"/><path d="M10 1.5l2 2.5 3-.5.5 3 2.5 2-2 2.5.5 3-3 .5-2 2.5-2-2.5-3 .5-.5-3L1.5 10l2-2.5-.5-3 3-.5z"/></svg>
<div class="a c" style="top:45px;font-size:14px">Talk With Us</div>
<svg class="ic" style="left:208px;top:41px" width="20" height="22" viewBox="0 0 20 22"><path d="M4 16V9a6 6 0 0 1 12 0v7l2 2H2zM8 20h4"/><circle cx="16" cy="3" r="2.5" fill="#f77b6b" stroke="none"/></svg>
<div class="a" style="left:54px;top:87px;width:136px;height:33px;border-radius:8px;background:#e6edfc"></div>
<div class="a" style="left:54px;top:87px;width:63px;height:33px;border-radius:8px;background:#2b4aa8;color:#fff;font-size:7.5px;display:flex;align-items:center;justify-content:center">Ongoing</div>
<div class="a" style="left:134px;top:99px;font-size:7.5px;color:#3b4883">Archived</div>
<div class="card" style="top:134px;height:49px"><div class="a" style="left:8px;top:8px;width:29px;height:29px;border-radius:50%;background:radial-gradient(circle at 50% 45%,#9a6a4a 40%,#3a2a20 75%)"></div><div class="a" style="left:46px;top:10px;font-size:7.5px;font-weight:bold">Jane Foster</div><div class="a" style="left:158px;top:11px;font-size:5.5px;color:#3b4883">9:45AM</div><div class="a" style="left:194px;top:8px;width:12px;height:12px;border-radius:50%;background:#f77b6b;color:#fff;font-size:6px;text-align:center;line-height:12px">1</div><div class="a" style="left:46px;top:27px;font-size:5.8px;color:#3b4883">That’s great to hear. Let’s get started sh...</div></div>
<div class="card" style="top:193px;height:49px"><div class="a" style="left:8px;top:8px;width:29px;height:29px;border-radius:50%;background:radial-gradient(circle at 50% 55%,#d8a48a 40%,#3a2a20 62%,#eee 70%)"></div><div class="a" style="left:46px;top:10px;font-size:7.5px;font-weight:bold">Kent Nelson</div><div class="a" style="left:190px;top:11px;font-size:5.5px;color:#3b4883">1 Dec</div><div class="a" style="left:46px;top:27px;font-size:5.8px;color:#3b4883">Hey there! I just wanted to check in on y...</div></div>
<div class="btn" style="top:436px;left:13px;right:13px">Start a new convo</div>
<div class="nav"><div class="hl" style="left:193px;top:10px"></div>
<svg class="ic" style="left:31px;top:17px;stroke:#8a8fa3" width="20" height="18" viewBox="0 0 20 18"><path d="M10 3v13M10 3Q6 1 2 2v13q4-1 8 1 4-2 8-1V2q-4-1-8 1"/></svg>
<svg class="ic" style="left:114px;top:14px;stroke:#8a8fa3" width="18" height="22" viewBox="0 0 18 22"><circle cx="9" cy="6" r="4"/><path d="M2 21v-3a7 5 0 0 1 14 0v3"/></svg>
<svg class="ic" style="left:197px;top:15px" width="20" height="20" viewBox="0 0 20 20"><path d="M10 2a8 8 0 1 0 4 15l4 1-1-4a8 8 0 0 0-7-12zM6 8h8M6 12h5"/></svg></div></div>

<div class="ph B" style="left:366px;top:2488px">
<div class="st">19:02</div><svg class="sb" width="34" height="10" viewBox="0 0 34 10"><rect x="0" y="6" width="2" height="3"/><rect x="3" y="4" width="2" height="5"/><rect x="6" y="2" width="2" height="7"/><rect x="9" y="0" width="2" height="9"/><path d="M14 3.5a6 6 0 0 1 8 0M15.5 5.6a3.6 3.6 0 0 1 5 0" stroke="currentColor" fill="none" stroke-width="1.3"/><circle cx="18" cy="8" r="1.2"/><rect x="24" y="1.5" width="8" height="6" rx="1"/></svg>
<svg class="ic" style="left:11px;top:40px" width="10" height="18"><path d="M8 1L2 9l6 8"/></svg>
<div class="a" style="left:71px;top:47px;width:98px;height:3px;background:#e6edfc;border-radius:2px"><i class="a" style="left:0;top:0;width:33px;height:3px;background:#2b4aa8;border-radius:2px"></i></div>
<div class="a" style="right:12px;top:42px;font-size:9px;color:#3b4883">1 OF 3</div>
<div class="a" style="left:12px;top:80px;font-size:11px;line-height:16px;width:225px">Let’s get you started Jupiter. How have you been feeling recently?</div>
<div class="opt" style="top:132px;height:38px;justify-content:flex-start;padding-left:31px;color:#4a63b8">Sad<i class="a" style="left:13px;top:13px;width:10px;height:10px;border-radius:2px;background:#e6edfc"></i></div>
<div class="opt" style="top:180px;height:38px;justify-content:flex-start;padding-left:31px;color:#4a63b8">Angry<i class="a" style="left:13px;top:13px;width:10px;height:10px;border-radius:2px;background:#e6edfc"></i></div>
<div class="opt" style="top:229px;height:38px;justify-content:flex-start;padding-left:31px;color:#4a63b8">Moody<i class="a" style="left:13px;top:13px;width:10px;height:10px;border-radius:2px;background:#e6edfc"></i></div>
<div class="opt" style="top:277px;height:38px;justify-content:flex-start;padding-left:31px;color:#4a63b8">Anxious<i class="a" style="left:13px;top:13px;width:10px;height:10px;border-radius:2px;background:#e6edfc"></i></div>
<div class="opt" style="top:326px;height:38px;justify-content:flex-start;padding-left:31px;color:#4a63b8">Stressed<i class="a" style="left:13px;top:13px;width:10px;height:10px;border-radius:2px;background:#e6edfc"></i></div>
<div class="opt" style="top:374px;height:38px;justify-content:flex-start;padding-left:31px;color:#4a63b8">Empty<i class="a" style="left:13px;top:13px;width:10px;height:10px;border-radius:2px;background:#e6edfc"></i></div>
<div class="opt" style="top:423px;height:38px;justify-content:flex-start;padding-left:31px;color:#4a63b8">I don’t know<i class="a" style="left:13px;top:13px;width:10px;height:10px;border-radius:2px;background:#e6edfc"></i></div>
<div class="btn" style="top:486px;left:13px;right:13px">Next</div></div>

<div class="ph B" style="left:681px;top:2488px">
<div class="st">19:02</div><svg class="sb" width="34" height="10" viewBox="0 0 34 10"><rect x="0" y="6" width="2" height="3"/><rect x="3" y="4" width="2" height="5"/><rect x="6" y="2" width="2" height="7"/><rect x="9" y="0" width="2" height="9"/><path d="M14 3.5a6 6 0 0 1 8 0M15.5 5.6a3.6 3.6 0 0 1 5 0" stroke="currentColor" fill="none" stroke-width="1.3"/><circle cx="18" cy="8" r="1.2"/><rect x="24" y="1.5" width="8" height="6" rx="1"/></svg>
<svg class="a" style="left:85px;top:180px" width="90" height="120" viewBox="0 0 90 120"><rect x="60" y="2" width="6" height="5" fill="none" stroke="#333"/><rect x="64" y="12" width="6" height="5" fill="none" stroke="#333"/><rect x="57" y="20" width="6" height="5" fill="none" stroke="#333"/><circle cx="22" cy="30" r="6" fill="#111"/><path d="M12 40l6 68 30 0 2-32-20-12z" fill="none" stroke="#111" stroke-width="1.5"/><path d="M24 40q14 6 18 22l4 10" stroke="#111" stroke-width="1.2" fill="none"/><path d="M42 70q20-8 28 4l8 24-8 4-10-16-16 2z" fill="#111"/><path d="M16 108l0 10M46 108l0 10" stroke="#111" stroke-width="1.3"/><rect x="50" y="40" width="4" height="8" fill="#111"/></svg>
<div class="a c" style="top:320px;font-size:8.5px">Please wait...</div>
<div class="btn" style="top:486px;left:13px;right:13px">Cancel</div></div>

<div class="ph B" style="left:994px;top:2488px">
<div class="a" style="left:0;right:0;top:0;height:88px;background:#e8eefc;border-radius:0 0 22px 0"></div>
<div class="st">19:02</div><svg class="sb" width="34" height="10" viewBox="0 0 34 10"><rect x="0" y="6" width="2" height="3"/><rect x="3" y="4" width="2" height="5"/><rect x="6" y="2" width="2" height="7"/><rect x="9" y="0" width="2" height="9"/><path d="M14 3.5a6 6 0 0 1 8 0M15.5 5.6a3.6 3.6 0 0 1 5 0" stroke="currentColor" fill="none" stroke-width="1.3"/><circle cx="18" cy="8" r="1.2"/><rect x="24" y="1.5" width="8" height="6" rx="1"/></svg>
<svg class="ic" style="left:11px;top:40px" width="10" height="18"><path d="M8 1L2 9l6 8"/></svg>
<div class="a" style="left:31px;top:32px;width:32px;height:32px;border-radius:50%;background:#fff"></div>
<div class="a" style="left:36px;top:36px;font-size:26px;line-height:24px;color:#f77b6b">✚</div>
<div class="a" style="left:73px;top:42px;font-size:11px">Henosis</div>
<div class="a" style="left:0;right:0;text-align:center;top:308px;font-size:7.5px;color:#3b4883">29 Oct</div>
<div class="a" style="left:23px;top:337px;width:164px;height:94px;border-radius:0 10px 10px 10px;background:#e8eefc;padding:9px 9px;font-size:7.8px;line-height:12.5px;color:#2b3d8a">Welcome to your safe space! We are experiencing high traffic at the moment but rest assured that we will reach out to you as soon as possible!</div>
<div class="a" style="left:170px;top:440px;font-size:5.5px;color:#c0c4d0">9:45AM</div>
<div class="a" style="left:0;right:0;top:468px;bottom:0;background:#2c4aa6;border-radius:22px 0 0 0"></div>
<svg class="ic wi" style="left:16px;top:495px" width="12" height="20" viewBox="0 0 12 20"><rect x="3" y="1" width="6" height="11" rx="3"/><path d="M1 9a5 5 0 0 0 10 0M6 14v4"/></svg>
<svg class="ic wi" style="left:44px;top:496px" width="17" height="17" viewBox="0 0 17 17"><rect x="1" y="1" width="15" height="15"/><circle cx="6" cy="6" r="2"/><path d="M1 14l5-5 4 3 6-6"/></svg>
<div class="a" style="left:72px;top:489px;width:157px;height:31px;border-radius:9px;background:#fff;font-size:7px;color:#bbb;padding:11px 0 0 9px">Type something here...</div>
<svg class="ic" style="left:208px;top:496px" width="16" height="16" viewBox="0 0 16 16"><path d="M15 1L1 7l6 2 2 6zM7 9l8-8"/></svg></div>

<div class="ph B" style="left:1309px;top:2488px;background:#bcbcbe">
<div class="a" style="left:0;right:0;top:0;height:88px;background:#adb3c5;border-radius:0 0 22px 0"></div>
<div class="st">19:02</div><svg class="sb" width="34" height="10" viewBox="0 0 34 10"><rect x="0" y="6" width="2" height="3"/><rect x="3" y="4" width="2" height="5"/><rect x="6" y="2" width="2" height="7"/><rect x="9" y="0" width="2" height="9"/><path d="M14 3.5a6 6 0 0 1 8 0M15.5 5.6a3.6 3.6 0 0 1 5 0" stroke="currentColor" fill="none" stroke-width="1.3"/><circle cx="18" cy="8" r="1.2"/><rect x="24" y="1.5" width="8" height="6" rx="1"/></svg>
<svg class="ic" style="left:11px;top:41px" width="10" height="18"><path d="M8 1L2 9l6 8"/></svg>
<div class="a" style="left:31px;top:33px;width:32px;height:32px;border-radius:50%;background:#bcbcbe"></div>
<div class="a" style="left:36px;top:37px;font-size:26px;line-height:24px;color:#c26a5e">✚</div>
<div class="a" style="left:73px;top:43px;font-size:11px">Henosis</div>
<div class="a" style="left:23px;top:337px;width:164px;height:94px;border-radius:0 10px 10px 10px;background:#a8aec3;padding:9px 9px;font-size:7.8px;line-height:12.5px;color:#2b3d8a">Welcome to your safe space! We are experiencing high traffic at the moment but rest assured that we will reach out to you as soon as possible!</div>
<div class="a" style="left:170px;top:440px;font-size:5.5px;color:#999">9:45AM</div>
<div class="a" style="left:24px;top:166px;width:198px;height:207px;border-radius:12px;background:#fff"></div>
<svg class="ic" style="left:201px;top:175px" width="12" height="12" viewBox="0 0 12 12"><path d="M1 1l10 10M11 1L1 11" stroke-width="1.6"/></svg>
<div class="a" style="left:24px;width:198px;text-align:center;top:196px;font-size:7px;color:#3b4883">We’ve found someone for you!</div>
<div class="a" style="left:24px;width:198px;text-align:center;top:211px;font-size:10px">Dr. Jane Foster</div>
<div class="a" style="left:80px;top:237px;width:82px;height:82px;border-radius:50%;background:radial-gradient(ellipse 24px 30px at 41px 40px,#6b432d 70%,transparent 73%),radial-gradient(ellipse 30px 20px at 41px 16px,#c9862e 60%,transparent 65%),linear-gradient(#8a6a58,#1a1614)"></div>
<div class="btn" style="top:330px;left:39px;right:37px">Start chat</div>
<div class="a" style="left:0;right:0;top:468px;bottom:0;background:#213d8f;border-radius:22px 0 0 0"></div>
<svg class="ic" style="left:16px;top:495px;stroke:#b9c0d8" width="12" height="20" viewBox="0 0 12 20"><rect x="3" y="1" width="6" height="11" rx="3"/><path d="M1 9a5 5 0 0 0 10 0M6 14v4"/></svg>
<svg class="ic" style="left:44px;top:496px;stroke:#b9c0d8" width="17" height="17" viewBox="0 0 17 17"><rect x="1" y="1" width="15" height="15"/><circle cx="6" cy="6" r="2"/><path d="M1 14l5-5 4 3 6-6"/></svg>
<div class="a" style="left:72px;top:490px;width:157px;height:31px;border-radius:9px;background:#c9c9c9;font-size:7px;color:#999;padding:11px 0 0 9px">Type something here...</div>
<svg class="ic" style="left:208px;top:497px" width="16" height="16" viewBox="0 0 16 16"><path d="M15 1L1 7l6 2 2 6zM7 9l8-8"/></svg></div>

<div class="ph B" style="left:1623px;top:2488px">
<div class="a" style="left:0;right:0;top:0;height:88px;background:#e8eefc;border-radius:0 0 22px 0"></div>
<div class="st">19:02</div><svg class="sb" width="34" height="10" viewBox="0 0 34 10"><rect x="0" y="6" width="2" height="3"/><rect x="3" y="4" width="2" height="5"/><rect x="6" y="2" width="2" height="7"/><rect x="9" y="0" width="2" height="9"/><path d="M14 3.5a6 6 0 0 1 8 0M15.5 5.6a3.6 3.6 0 0 1 5 0" stroke="currentColor" fill="none" stroke-width="1.3"/><circle cx="18" cy="8" r="1.2"/><rect x="24" y="1.5" width="8" height="6" rx="1"/></svg>
<svg class="ic" style="left:8px;top:40px" width="10" height="18"><path d="M8 1L2 9l6 8"/></svg>
<div class="a" style="left:31px;top:31px;width:34px;height:34px;border-radius:50%;background:radial-gradient(ellipse 10px 13px at 17px 19px,#6b432d 80%,transparent 85%),radial-gradient(ellipse 14px 9px at 17px 9px,#c9862e 60%,transparent 65%),#2a201c"></div>
<div class="a" style="left:72px;top:36px;font-size:10.5px">Jane Foster</div>
<div class="a" style="left:72px;top:52px;font-size:5.8px;color:#3b4883">Available now</div>
<svg class="ic" style="left:180px;top:40px" width="16" height="18" viewBox="0 0 16 18"><path d="M3 1l3 4-2 2q2 5 6 7l2-2 3 3-2 2Q6 16 2 4z"/></svg>
<svg class="ic" style="left:214px;top:40px" width="20" height="16" viewBox="0 0 20 16"><rect x="1" y="2" width="12" height="12"/><path d="M13 6l6-3v10l-6-3"/></svg>
<div class="a" style="left:0;right:0;text-align:center;top:214px;font-size:7.5px;color:#3b4883">29 Oct</div>
<div class="a" style="left:23px;top:241px;width:163px;height:54px;border-radius:0 10px 10px 10px;background:#e8eefc;padding:9px 9px;font-size:7.8px;line-height:12.5px;color:#2b3d8a">Hi Jupiter! I’m so happy that you’re here. How are you today?</div>
<div class="a" style="left:170px;top:301px;font-size:5.5px;color:#c0c4d0">9:43AM</div>
<div class="a" style="left:60px;top:321px;width:171px;height:43px;border-radius:10px 0 10px 10px;background:#2c4aa6;padding:9px 9px;font-size:7.8px;line-height:12.5px;color:#fff">Hello, nice to meet you. I’m fine thank you.</div>
<div class="a" style="left:60px;top:370px;font-size:5.5px;color:#c0c4d0">9:44AM</div>
<div class="a" style="left:23px;top:389px;width:163px;height:42px;border-radius:0 10px 10px 10px;background:#e8eefc;padding:9px 9px;font-size:7.8px;line-height:12.5px;color:#2b3d8a">That’s great to hear. Let’s get started shall we?</div>
<div class="a" style="left:170px;top:440px;font-size:5.5px;color:#c0c4d0">9:45AM</div>
<div class="a" style="left:0;right:0;top:468px;bottom:0;background:#2c4aa6;border-radius:22px 0 0 0"></div>
<svg class="ic wi" style="left:16px;top:495px" width="12" height="20" viewBox="0 0 12 20"><rect x="3" y="1" width="6" height="11" rx="3"/><path d="M1 9a5 5 0 0 0 10 0M6 14v4"/></svg>
<svg class="ic wi" style="left:44px;top:496px" width="17" height="17" viewBox="0 0 17 17"><rect x="1" y="1" width="15" height="15"/><circle cx="6" cy="6" r="2"/><path d="M1 14l5-5 4 3 6-6"/></svg>
<div class="a" style="left:72px;top:489px;width:157px;height:31px;border-radius:9px;background:#fff;font-size:7px;color:#bbb;padding:11px 0 0 9px">Type something here...</div>
<svg class="ic" style="left:208px;top:496px" width="16" height="16" viewBox="0 0 16 16"><path d="M15 1L1 7l6 2 2 6zM7 9l8-8"/></svg></div>

</body></html>
